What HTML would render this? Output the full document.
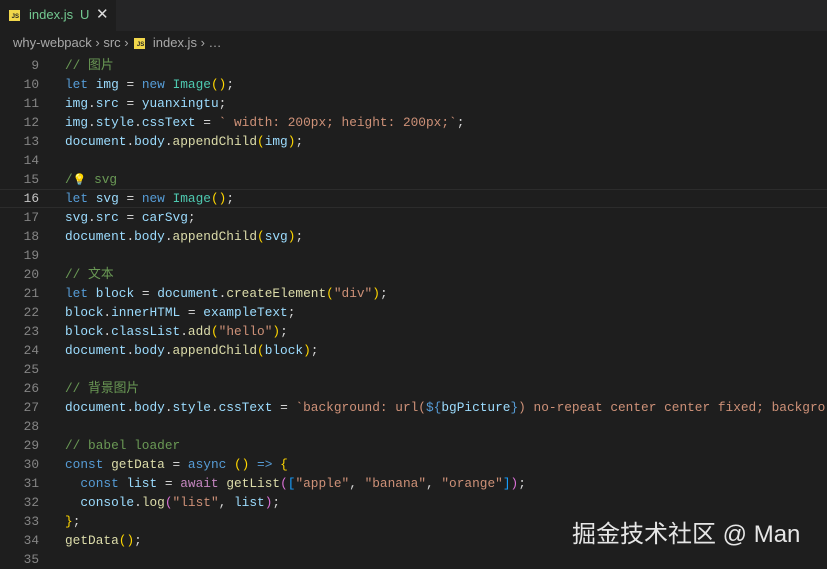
<!DOCTYPE html>
<html><head><meta charset="utf-8"><style>
body{margin:0;width:827px;height:563px;background:#1e1e1e;overflow:hidden;position:relative;font-family:"Liberation Sans","Noto Sans CJK SC",sans-serif}
.tabbar{position:absolute;left:0;top:0;width:827px;height:31px;background:#252526}
.tab{position:absolute;left:0;top:0;width:116px;height:31px;background:#1e1e1e;color:#73c991;font-size:13px;border-right:1px solid #252526}
.js{display:inline-block;width:11px;height:11px;background:#f1d74b;color:#222;font-size:6px;font-weight:bold;text-align:right;line-height:14px;box-sizing:border-box;padding-right:1px;vertical-align:middle}
.bc{position:absolute;left:13px;top:35px;color:#a9a9a9;font-size:13px}
.code{position:absolute;left:0;top:56px;width:827px;font-family:"Liberation Mono","Noto Sans CJK SC",monospace;font-size:12.8px;line-height:19px;color:#d4d4d4}
.ln{display:inline-block;width:39px;text-align:right;color:#858585;margin-right:26px}
.row{height:19px;white-space:pre;box-sizing:border-box}
.cur{border-top:1px solid #2c2c2c;border-bottom:1px solid #2c2c2c;line-height:17px}
.k{color:#569cd6}.v{color:#9cdcfe}.c{color:#4ec9b0}.f{color:#dcdcaa}.s{color:#ce9178}.m{color:#6a9955}.p{color:#c586c0}
.y{color:#ffd700}.pu{color:#da70d6}.b{color:#179fff}
.wm{position:absolute;left:572px;top:514px;color:#e6e6e6;font-size:24px}
</style></head><body>
<div class="tabbar"><div class="tab"><span class="js" style="position:absolute;left:9px;top:10px">JS</span><span style="position:absolute;left:29px;top:7px">index.js</span><span style="position:absolute;left:80px;top:7px">U</span><span style="position:absolute;left:96px;top:5px;color:#ddd;font-size:15px">✕</span></div></div>
<div class="bc">why-webpack <span>›</span> src <span>›</span> <span class="js" style="margin:0 4px 0 2px">JS</span> index.js <span>›</span> …</div>
<div class="code"><div class="row"><span class="ln">9</span><span class="m">// 图片</span></div><div class="row"><span class="ln">10</span><span class="k">let</span> <span class="v">img</span> = <span class="k">new</span> <span class="c">Image</span><span class="y">()</span>;</div><div class="row"><span class="ln">11</span><span class="v">img</span>.<span class="v">src</span> = <span class="v">yuanxingtu</span>;</div><div class="row"><span class="ln">12</span><span class="v">img</span>.<span class="v">style</span>.<span class="v">cssText</span> = <span class="s">` width: 200px; height: 200px;`</span>;</div><div class="row"><span class="ln">13</span><span class="v">document</span>.<span class="v">body</span>.<span class="f">appendChild</span><span class="y">(</span><span class="v">img</span><span class="y">)</span>;</div><div class="row"><span class="ln">14</span></div><div class="row"><span class="ln">15</span><span class="m">/<span style="color:#ffcc00;font-size:11px">💡</span> svg</span></div><div class="row cur"><span class="ln" style="color:#c6c6c6">16</span><span class="k">let</span> <span class="v">svg</span> = <span class="k">new</span> <span class="c">Image</span><span class="y">()</span>;</div><div class="row"><span class="ln">17</span><span class="v">svg</span>.<span class="v">src</span> = <span class="v">carSvg</span>;</div><div class="row"><span class="ln">18</span><span class="v">document</span>.<span class="v">body</span>.<span class="f">appendChild</span><span class="y">(</span><span class="v">svg</span><span class="y">)</span>;</div><div class="row"><span class="ln">19</span></div><div class="row"><span class="ln">20</span><span class="m">// 文本</span></div><div class="row"><span class="ln">21</span><span class="k">let</span> <span class="v">block</span> = <span class="v">document</span>.<span class="f">createElement</span><span class="y">(</span><span class="s">"div"</span><span class="y">)</span>;</div><div class="row"><span class="ln">22</span><span class="v">block</span>.<span class="v">innerHTML</span> = <span class="v">exampleText</span>;</div><div class="row"><span class="ln">23</span><span class="v">block</span>.<span class="v">classList</span>.<span class="f">add</span><span class="y">(</span><span class="s">"hello"</span><span class="y">)</span>;</div><div class="row"><span class="ln">24</span><span class="v">document</span>.<span class="v">body</span>.<span class="f">appendChild</span><span class="y">(</span><span class="v">block</span><span class="y">)</span>;</div><div class="row"><span class="ln">25</span></div><div class="row"><span class="ln">26</span><span class="m">// 背景图片</span></div><div class="row"><span class="ln">27</span><span class="v">document</span>.<span class="v">body</span>.<span class="v">style</span>.<span class="v">cssText</span> = <span class="s">`background: url(</span><span class="k">${</span><span class="v">bgPicture</span><span class="k">}</span><span class="s">) no-repeat center center fixed; backgro</span></div><div class="row"><span class="ln">28</span></div><div class="row"><span class="ln">29</span><span class="m">// babel loader</span></div><div class="row"><span class="ln">30</span><span class="k">const</span> <span class="f">getData</span> = <span class="k">async</span> <span class="y">()</span> <span class="k">=&gt;</span> <span class="y">{</span></div><div class="row"><span class="ln">31</span>  <span class="k">const</span> <span class="v">list</span> = <span class="p">await</span> <span class="f">getList</span><span class="pu">(</span><span class="b">[</span><span class="s">"apple"</span>, <span class="s">"banana"</span>, <span class="s">"orange"</span><span class="b">]</span><span class="pu">)</span>;</div><div class="row"><span class="ln">32</span>  <span class="v">console</span>.<span class="f">log</span><span class="pu">(</span><span class="s">"list"</span>, <span class="v">list</span><span class="pu">)</span>;</div><div class="row"><span class="ln">33</span><span class="y">}</span>;</div><div class="row"><span class="ln">34</span><span class="f">getData</span><span class="y">()</span>;</div><div class="row"><span class="ln">35</span></div></div>
<div class="wm">掘金技术社区 @ Man</div>
</body></html>
